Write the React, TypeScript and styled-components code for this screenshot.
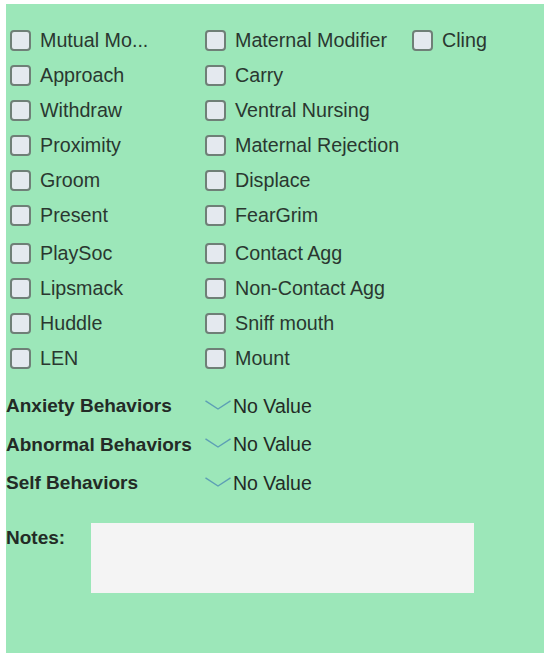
import styled, {createGlobalStyle} from "styled-components";

const GlobalStyle = createGlobalStyle`
  body {
    margin: 0;
    background: #ffffff;
    font-family: "Liberation Sans", Arial, sans-serif;
  }
`

const rows: string[][] = [
    ["Mutual Mo...", "Maternal Modifier", "Cling"],
    ["Approach", "Carry"],
    ["Withdraw", "Ventral Nursing"],
    ["Proximity", "Maternal Rejection"],
    ["Groom", "Displace"],
    ["Present", "FearGrim"],
    ["PlaySoc", "Contact Agg"],
    ["Lipsmack", "Non-Contact Agg"],
    ["Huddle", "Sniff mouth"],
    ["LEN", "Mount"],
]

const behaviors = ["Anxiety Behaviors", "Abnormal Behaviors", "Self Behaviors"]

const Chevron = () => (
    <ChevronIcon width="26" height="10" viewBox="0 0 26 10">
        <polyline points="0.5,0.8 13,9 25.5,0.8" fill="none" stroke="#5d9fb5" strokeWidth="1.4"/>
    </ChevronIcon>
)

const App = () => {
    return (
        <>
            <GlobalStyle/>
            <Panel>
                <CheckGrid>
                    {rows.map((row, i) =>
                        <CheckRow key={i} $extra={i === 6 ? 3 : 0}>
                            {row.map((label) =>
                                <CheckItem key={label}>
                                    <Box/>
                                    <Label>{label}</Label>
                                </CheckItem>
                            )}
                        </CheckRow>
                    )}
                </CheckGrid>
                <BehaviorList>
                    {behaviors.map((b) =>
                        <BehaviorRow key={b}>
                            <BehaviorLabel>{b}</BehaviorLabel>
                            <Picker>
                                <Chevron/>
                                <PickerValue>No Value</PickerValue>
                            </Picker>
                        </BehaviorRow>
                    )}
                </BehaviorList>
                <NotesRow>
                    <NotesLabel>Notes:</NotesLabel>
                    <NotesArea/>
                </NotesRow>
            </Panel>
        </>
    )
}

export default App


const Panel = styled.div`
  margin: 4px 0 0 6px;
  width: 538px;
  height: 649px;
  box-sizing: border-box;
  background: #9ce7b9;
  padding-top: 19px;
`

const CheckGrid = styled.div`
  display: flex;
  flex-direction: column;
  padding-left: 4px;
`

const CheckRow = styled.div<{ $extra: number }>`
  display: grid;
  grid-template-columns: 195px 207px auto;
  height: 35px;
  align-items: center;
  margin-top: ${p => p.$extra}px;
`

const CheckItem = styled.div`
  display: flex;
  align-items: center;
  gap: 9px;
`

const Box = styled.span`
  width: 17px;
  height: 17px;
  flex: none;
  background: #e4e9ef;
  border: 2px solid #6f7f77;
  border-radius: 4px;
`

const Label = styled.span`
  font-size: 19.7px;
  color: #2a3730;
  white-space: nowrap;
`

const BehaviorList = styled.div`
  display: flex;
  flex-direction: column;
  margin-top: 11px;
`

const BehaviorRow = styled.div`
  display: grid;
  grid-template-columns: 199px auto;
  height: 38.5px;
  align-items: center;
`

const BehaviorLabel = styled.span`
  font-size: 19px;
  font-weight: bold;
  color: #232b26;
  white-space: nowrap;
`

const Picker = styled.div`
  display: flex;
  align-items: center;
  gap: 2px;
`

const ChevronIcon = styled.svg`
  flex: none;
  margin-bottom: 3px;
`

const PickerValue = styled.span`
  font-size: 19.5px;
  color: #232b26;
`

const NotesRow = styled.div`
  display: flex;
  align-items: flex-start;
  margin-top: 20px;
`

const NotesLabel = styled.span`
  width: 85px;
  padding-top: 4px;
  font-size: 19px;
  font-weight: bold;
  color: #232b26;
`

const NotesArea = styled.div`
  width: 383px;
  height: 70px;
  background: #f4f4f4;
`
